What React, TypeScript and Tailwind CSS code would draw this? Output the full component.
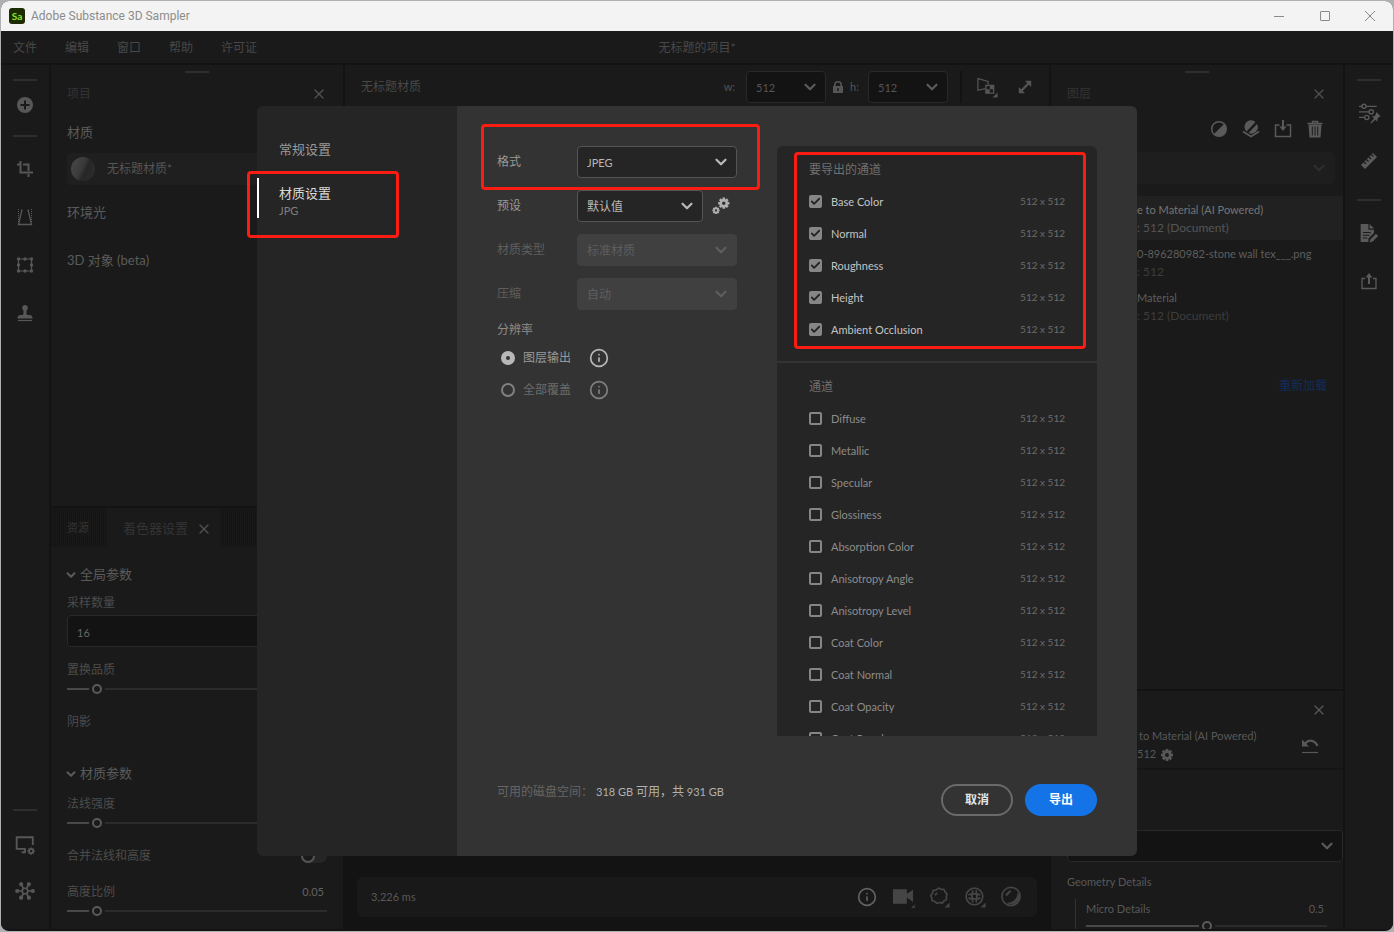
import { useState, type CSSProperties, type ReactNode } from "react";
import { Check, ChevronDown, Info, X } from "lucide-react";

const exported = ["Base Color", "Normal", "Roughness", "Height", "Ambient Occlusion"];
const available = [
  "Diffuse",
  "Metallic",
  "Specular",
  "Glossiness",
  "Absorption Color",
  "Anisotropy Angle",
  "Anisotropy Level",
  "Coat Color",
  "Coat Normal",
  "Coat Opacity",
  "Coat Roughness",
];

function Icon({ size = 18, children }: { size?: number; children: ReactNode }) {
  return (
    <svg
      width={size}
      height={size}
      viewBox="0 0 18 18"
      fill="none"
      stroke="currentColor"
      strokeWidth="1.5"
      className="shrink-0 overflow-visible"
    >
      {children}
    </svg>
  );
}

function IconButton({ label, className = "", children }: { label: string; className?: string; children: ReactNode }) {
  return (
    <button type="button" aria-label={label} className={`flex items-center justify-center ${className}`}>
      {children}
    </button>
  );
}

const gearTeeth = [0, 45, 90, 135, 180, 225, 270, 315];

function Gear({ cx, cy, r }: { cx: number; cy: number; r: number }) {
  return (
    <g strokeWidth={r * 0.5}>
      <circle cx={cx} cy={cy} r={r * 0.6} />
      {gearTeeth.map((a) => (
        <path key={a} d={`M${cx} ${cy - r * 0.7}V${cy - r * 1.1}`} transform={`rotate(${a} ${cx} ${cy})`} />
      ))}
    </g>
  );
}

function Handle() {
  return <div className="h-[2px] w-6 bg-[#2e2e2e]" />;
}

// small triangle that marks a button with a flyout
function Corner() {
  return <path d="M18.5 14v4.5H14z" fill="currentColor" stroke="none" />;
}

interface SelectProps {
  id: string;
  label: string;
  value: string;
  width: string;
  look: string;
  chevron: string;
  disabled?: boolean;
}

function Select({ id, label, value, width, look, chevron, disabled }: SelectProps) {
  return (
    <div className={`relative ${width}`}>
      <select
        id={id}
        aria-label={label}
        disabled={disabled}
        className={`h-8 w-full appearance-none rounded border pl-[9px] pt-0.5 opacity-100 outline-none ${look}`}
      >
        <option>{value}</option>
      </select>
      <ChevronDown
        size={18}
        strokeWidth={3}
        className={`pointer-events-none absolute right-[7px] top-[7px] ${chevron}`}
      />
    </div>
  );
}

function Slider({ label, initial }: { label: string; initial: number }) {
  const [value, setValue] = useState(initial);
  return (
    <input
      type="range"
      aria-label={label}
      value={value}
      onChange={(e) => setValue(Number(e.target.value))}
      style={{ "--pos": `calc(5px + (100% - 10px) * ${value / 100})` } as CSSProperties}
      className="block h-[14px] w-full appearance-none bg-transparent [&::-webkit-slider-runnable-track]:h-[2px] [&::-webkit-slider-runnable-track]:bg-[linear-gradient(90deg,#484848_var(--pos),#2b2b2b_var(--pos))] [&::-webkit-slider-thumb]:-mt-1 [&::-webkit-slider-thumb]:size-[10px] [&::-webkit-slider-thumb]:appearance-none [&::-webkit-slider-thumb]:rounded-full [&::-webkit-slider-thumb]:border-2 [&::-webkit-slider-thumb]:border-[#5a5a5a] [&::-webkit-slider-thumb]:bg-[#1a1a1a] [&::-webkit-slider-thumb]:shadow-[0_0_0_3px_#1a1a1a]"
    />
  );
}

function TitleBar() {
  return (
    <header className="flex h-[30px] shrink-0 items-center bg-[#f3f3f3] pl-2">
      <span className="flex size-4 items-center justify-center rounded-[3px] bg-[#1c2b02] text-[10px] font-bold leading-none text-[#8ce62c]">
        Sa
      </span>
      <span className="pl-1.5 font-[Roboto,sans-serif] text-xs text-[#8c8c8c]">Adobe Substance 3D Sampler</span>
      <div className="ml-auto flex text-[#8a8a8a]">
        <IconButton label="最小化" className="h-[30px] w-[46px]">
          <svg width="10" height="10" stroke="currentColor"><path d="M0 5.5h10" /></svg>
        </IconButton>
        <IconButton label="最大化" className="h-[30px] w-[45px]">
          <svg width="10" height="10" stroke="currentColor" fill="none"><rect x=".5" y=".5" width="9" height="9" rx=".5" /></svg>
        </IconButton>
        <IconButton label="关闭" className="h-[30px] w-[46px]">
          <svg width="10" height="10" stroke="currentColor"><path d="M0 0l10 10M10 0L0 10" /></svg>
        </IconButton>
      </div>
    </header>
  );
}

function MenuBar() {
  return (
    <nav className="relative flex h-[34px] shrink-0 items-center gap-7 border-b-2 border-[#131313] bg-[#1a1a1a] pl-3 pt-0.5 text-xs text-[#484848]">
      {["文件", "编辑", "窗口", "帮助", "许可证"].map((item) => (
        <button key={item} type="button">
          {item}
        </button>
      ))}
      <span className="pointer-events-none absolute inset-x-0 text-center">无标题的项目*</span>
    </nav>
  );
}

function LeftRail() {
  return (
    <aside className="flex w-[50px] shrink-0 flex-col items-center border-r-2 border-[#131313] bg-[#1a1a1a] pt-3.5 text-[#575757]">
      <Handle />
      <IconButton label="添加" className="mt-[15px] size-[18px]">
        <Icon>
          <circle cx="9" cy="9" r="8" fill="currentColor" stroke="none" />
          <path d="M9 4.5v9M4.5 9h9" stroke="#1a1a1a" strokeWidth="2" />
        </Icon>
      </IconButton>
      <div className="mt-[21px]">
        <Handle />
      </div>
      <div className="mt-[23px] flex flex-col gap-[30px]">
        <IconButton label="裁剪">
          <Icon>
            <path d="M4.5 1v11.5H17M1 4.5h3.500M7 4.500h5.500V11M12.500 14v3" strokeWidth="2" />
          </Icon>
        </IconButton>
        <IconButton label="透视">
          <Icon>
            <path d="M6 1.500L2.500 16.500h13L12 1.500" strokeWidth="1.300" />
            <path d="M2.500 1v14M15.500 1v14" strokeDasharray="1 1" strokeWidth="1" />
          </Icon>
        </IconButton>
        <IconButton label="变换">
          <Icon>
            <path d="M2.500 3h13v12h-13z" strokeWidth="1.200" />
            {[2.5, 9, 15.5].map((x) =>
              [3, 9, 15].map((y) => (x === 9 && y === 9 ? null : <circle key={`${x}-${y}`} cx={x} cy={y} r="1.700" fill="currentColor" stroke="none" />)),
            )}
          </Icon>
        </IconButton>
        <IconButton label="仿制图章">
          <Icon>
            <path d="M9 1a3 3 0 0 1 1.700 5.400c-.6.6-.2 3.400.3 4.600h2.500a3 3 0 0 1 3 3.500h-15A3 3 0 0 1 4.500 11H7c.5-1.200.9-4 .3-4.600A3 3 0 0 1 9 1z" fill="currentColor" stroke="none" />
            <path d="M2 16.500h14" strokeWidth="1.200" />
          </Icon>
        </IconButton>
      </div>
      <div className="mt-auto">
        <Handle />
      </div>
      <IconButton label="显示设置" className="mt-6">
        <Icon size={20}>
          <path d="M9 12.500H1.500V2h14.500v7M9 12v3.500H6" strokeWidth="1.700" />
          <Gear cx={14.5} cy={14.5} r={3} />
        </Icon>
      </IconButton>
      <IconButton label="社区" className="mb-7 mt-[26px]">
        <Icon size={20}>
          <circle cx="9" cy="9" r="2.500" />
          {[30, 90, 150, 210, 270, 330].map((a) => (
            <g key={a} transform={`rotate(${a} 9 9)`}>
              <path d="M9 6.500V3" />
              <circle cx="9" cy="2" r="1.900" fill="currentColor" stroke="none" />
            </g>
          ))}
        </Icon>
      </IconButton>
    </aside>
  );
}

function PanelHeader({ title }: { title: string }) {
  return (
    <>
      <div className="flex justify-center pt-1.5">
        <Handle />
      </div>
      <div className="mt-[9px] flex h-6 items-center justify-between px-4 text-xs text-[#333]">
        {title}
        <IconButton label={`关闭${title}`} className="text-[#525252]">
          <X size={16} strokeWidth={1.8} />
        </IconButton>
      </div>
    </>
  );
}

function SectionTitle({ children, className = "" }: { children: string; className?: string }) {
  return (
    <button type="button" className={`flex h-6 items-center gap-0.5 text-[13px] text-[#5a5a5a] ${className}`}>
      <ChevronDown size={14} strokeWidth={3.5} className="-ml-[3px]" />
      {children}
    </button>
  );
}

function LeftPanel() {
  return (
    <div className="flex w-[294px] shrink-0 flex-col border-r-2 border-[#131313] bg-[#1a1a1a]">
      <section className="min-h-0 flex-1 overflow-hidden">
        <PanelHeader title="项目" />
        <div className="px-4 text-[13px] text-[#5a5a5a]">
          <h2 className="mt-[15px] flex h-6 items-center">材质</h2>
          <button type="button" className="mt-2 flex h-8 w-full items-center gap-3 rounded bg-[#1f1f1f] pl-1 text-xs text-[#555]">
            <span className="size-6 rounded-full bg-[linear-gradient(115deg,#4a4a4a,#3a3a3a_45%,#262626_60%,#303030)]" />
            无标题材质*
          </button>
          <h2 className="mt-4 flex h-6 items-center">环境光</h2>
          <h2 className="mt-6 flex h-6 items-center">3D 对象 (beta)</h2>
        </div>
      </section>
      <section className="border-t-2 border-[#131313]">
        <div className="flex h-[39px] bg-[repeating-linear-gradient(90deg,#141414_0_1px,#191919_1px_2px)] text-[#343434]">
          <button type="button" className="w-14 pl-4 pt-0.5 text-left text-[11px]">
            资源
          </button>
          <div className="flex items-center gap-2 bg-[#1a1a1a] pl-4 pr-2 pt-0.5 text-[13px]">
            <button type="button">着色器设置</button>
            <IconButton label="关闭着色器设置" className="text-[#525252]">
              <X size={16} strokeWidth={1.8} />
            </IconButton>
          </div>
        </div>
        <div className="px-4 pb-[11px] pt-4 text-xs text-[#4c4c4c]">
          <SectionTitle>全局参数</SectionTitle>
          <label htmlFor="samples" className="mt-1 flex h-6 items-center">
            采样数量
          </label>
          <input
            id="samples"
            defaultValue="16"
            className="block h-8 w-full rounded border border-[#292929] bg-[#131313] px-[9px] pt-0.5 text-[11px] text-[#666]"
          />
          <div className="mt-[11px] flex h-6 items-center">置换品质</div>
          <Slider label="置换品质" initial={10} />
          <div className="mt-3.5 flex h-6 items-center">阴影</div>
          <SectionTitle className="mt-7">材质参数</SectionTitle>
          <div className="mt-1.5 flex h-6 items-center">法线强度</div>
          <Slider label="法线强度" initial={10} />
          <label className="mt-3.5 flex h-6 items-center justify-between">
            合并法线和高度
            <input
              type="checkbox"
              role="switch"
              className="h-3.5 w-[26px] appearance-none rounded-full bg-[#262626] before:block before:size-3.5 before:rounded-full before:border-2 before:border-[#555] before:bg-[#1a1a1a]"
            />
          </label>
          <div className="mt-3 flex h-6 items-center justify-between pr-[3px]">
            高度比例 <span className="text-[11px] text-[#626262]">0.05</span>
          </div>
          <Slider label="高度比例" initial={10} />
        </div>
      </section>
    </div>
  );
}

const darkSelect = "border-[#292929] bg-[#131313] text-[11px] text-[#555]";

function Viewport() {
  return (
    <main className="flex min-w-0 flex-1 flex-col bg-[#131313]">
      <div className="flex h-11 shrink-0 items-center bg-[#1a1a1a] pl-4 text-[11px] text-[#555]">
        <span className="text-xs text-[#484848]">无标题材质</span>
        <label htmlFor="w" className="ml-auto mr-[11px]">
          w:
        </label>
        <Select id="w" label="w" value="512" width="w-20" look={darkSelect} chevron="text-[#5a5a5a]" />
        <svg width="10" height="12" viewBox="0 0 10 12" className="mx-[7px] fill-current">
          <path d="M1 5V4a4 4 0 0 1 8 0v1h1v7H0V5zm1.600 0h4.800V4a2.400 2.400 0 0 0-4.800 0zM4.300 7v3h1.400V7z" />
        </svg>
        <label htmlFor="h" className="mr-[9px]">
          h:
        </label>
        <Select id="h" label="h" value="512" width="w-20" look={darkSelect} chevron="text-[#5a5a5a]" />
        <div className="ml-3 h-8 w-0.5 bg-[#131313]" />
        <IconButton label="视图" className="ml-[15px]">
          <Icon size={20}>
            <path d="M7.500 10.500L.8 12V1.500L10 4v3" strokeWidth="1.100" />
            <path d="M8 7.500h7v7H8z" strokeWidth="1.200" />
            <path d="M11.500 7.500H15V11h-3.500zM8 11h3.500v3.500H8z" fill="currentColor" stroke="none" />
            <Corner />
          </Icon>
        </IconButton>
        <IconButton label="展开" className="ml-5 mr-4">
          <Icon size={16}>
            <path d="M4 14L14 4" strokeWidth="2.600" />
            <path d="M9 2h7v7zM2 9v7h7z" fill="currentColor" stroke="none" />
          </Icon>
        </IconButton>
      </div>
      <div className="mx-3 mb-3 mt-auto flex h-10 items-center rounded-md bg-[#191919] pl-3.5 pr-4 text-[11px] text-[#585858]">
        3,226 ms
        <div className="ml-auto flex items-center gap-4 text-[#454545]">
          <IconButton label="信息" className="text-[#626262]">
            <Info size={20} />
          </IconButton>
          <IconButton label="相机">
            <Icon size={20}>
              <path d="M0 2h12.500v4L18 2.500v11L12.500 9.500V15H0z" fill="currentColor" stroke="none" />
              <path d="M20 14.500v5h-5z" fill="currentColor" stroke="#191919" strokeWidth="1" />
            </Icon>
          </IconButton>
          <IconButton label="环境">
            <Icon size={20}>
              <path d="M8.500 1l2.300 1.100 2.600-.1 1 2.400 1.800 1.800-.7 2.500.3 2.500-2.300 1.300-1.600 2-2.400-.5-2.500.7-1.900-1.700-2.500-.9-.1-2.500L1.500 7.500l1.700-1.900.5-2.500 2.500-.3z" strokeLinejoin="round" />
              <path d="M5.500 7.500a4 4 0 0 1 2-2" />
              <Corner />
            </Icon>
          </IconButton>
          <IconButton label="网格">
            <Icon size={20}>
              <circle cx="8.500" cy="8.500" r="7.500" />
              <path d="M7 3Q5.500 8.500 7 14M10 3q1.500 5.500 0 11M3 7q5.500-1.500 11 0M3 10q5.500 1.500 11 0" />
              <Corner />
            </Icon>
          </IconButton>
          <IconButton label="材质球">
            <Icon size={20}>
              <circle cx="9" cy="8.500" r="8.200" />
              <path d="M15 5.500c0 5-4 9-9 9 5 2.500 10.500-1 10.500-6z" fill="currentColor" strokeWidth=".5" />
              <path d="M5 7l3-3" strokeLinecap="round" strokeWidth="2" />
            </Icon>
          </IconButton>
        </div>
      </div>
    </main>
  );
}

function Layer({ name, info, active }: { name: string; info: string; active?: boolean }) {
  return (
    <li className={`h-11 pl-[86px] text-xs ${active ? "bg-[#212121] text-[#757575]" : "text-[#5e5e5e]"}`}>
      <div className="flex h-7 items-center text-[11px]">{name}</div>
      <div className={`flex h-2 items-center ${active ? "text-[#555]" : "text-[#3d3d3d]"}`}>{info}</div>
    </li>
  );
}

function RightPanel() {
  return (
    <div className="flex w-[296px] shrink-0 flex-col border-x-2 border-[#131313] bg-[#1a1a1a]">
      <section className="min-h-0 flex-1 overflow-hidden">
        <PanelHeader title="图层" />
        <div className="mt-3.5 flex justify-end gap-3.5 pr-[19px] text-[#5a5a5a]">
          <IconButton label="调整">
            <Icon>
              <circle cx="9" cy="9" r="7.300" />
              <path d="M14.200 3.800A7.300 7.300 0 1 1 3.800 14.200z" fill="currentColor" stroke="none" />
            </Icon>
          </IconButton>
          <IconButton label="材质图层">
            <Icon>
              <path d="M13.500 2A6.500 6.500 0 0 0 4.500 11.500zM15 4a6.500 6.500 0 0 1-8.500 9z" fill="currentColor" stroke="none" />
              <path d="M1 11.500l8 5 8-5" strokeWidth="1.800" />
            </Icon>
          </IconButton>
          <IconButton label="导入">
            <Icon>
              <path d="M5.500 5H1.500v11.500h15V5h-4" />
              <path d="M9 0v8" strokeWidth="2" />
              <path d="M5.500 6.500h7L9 11z" fill="currentColor" stroke="none" />
            </Icon>
          </IconButton>
          <IconButton label="删除">
            <Icon>
              <path d="M1.500 3.500h15M6.500 3V1.500h5V3" />
              <path d="M2.500 4.500h13l-1 13h-11z" fill="currentColor" stroke="none" />
              <path d="M6.300 6.500v9M9 6.500v9M11.700 6.500v9" stroke="#1a1a1a" strokeWidth="1" />
            </Icon>
          </IconButton>
        </div>
        <div className="ml-4 mr-2 mt-3.5">
          <Select id="filter" label="筛选" value="" width="w-full" look="border-[#1e1e1e] bg-[#1e1e1e] text-[#333]" chevron="text-[#2e2e2e]" />
        </div>
        <ul className="mt-3">
          <Layer name="e to Material (AI Powered)" info=": 512 (Document)" active />
          <Layer name="0-896280982-stone wall tex___.png" info=": 512" />
          <Layer name="Material" info=": 512 (Document)" />
        </ul>
        <div className="mt-12 flex h-5 items-center justify-end pr-4 text-xs text-[#122d5c]">
          <a href="#reload">重新加载</a>
        </div>
      </section>
      <section className="h-[240px] shrink-0 overflow-hidden border-t-2 border-[#131313] text-[11px] text-[#585858]">
        <div className="flex h-9 items-center justify-end pr-4 pt-0.5">
          <IconButton label="关闭属性">
            <X size={16} strokeWidth={1.8} />
          </IconButton>
        </div>
        <div className="flex h-[43px] items-start justify-between border-b-2 border-[#151515] pl-[88px] pr-6">
          <div>
            <div className="flex h-[18px] items-center">to Material (AI Powered)</div>
            <div className="-ml-0.5 flex h-[19px] items-center gap-1">
              512
              <IconButton label="设置">
                <Icon size={14}>
                  <Gear cx={9} cy={9} r={7} />
                </Icon>
              </IconButton>
            </div>
          </div>
          <IconButton label="重置" className="mt-2.5">
            <Icon>
              <path d="M4 6.500C8 2 14 3 16.500 9" strokeWidth="2.200" />
              <path d="M1 2.500v7h7z" fill="currentColor" stroke="none" />
              <path d="M1 15.500h16" strokeWidth="1.200" />
            </Icon>
          </IconButton>
        </div>
        <div className="ml-4 mt-[60px]">
          <Select id="mode" label="模式" value="" width="w-full" look={darkSelect} chevron="text-[#5a5a5a]" />
        </div>
        <div className="mt-2 flex h-6 items-center pl-4">Geometry Details</div>
        <div className="ml-6 mr-4 mt-[5px] border-l border-[#333] pl-[10px]">
          <div className="flex h-5 items-center justify-between pr-[3px]">
            Micro Details <span>0.5</span>
          </div>
          <Slider label="Micro Details" initial={50} />
        </div>
      </section>
    </div>
  );
}

function RightRail() {
  return (
    <aside className="flex w-12 shrink-0 flex-col items-center bg-[#1a1a1a] pt-3.5 text-[#5a5a5a]">
      <Handle />
      <IconButton label="参数" className="mt-[22px]">
        <Icon size={20}>
          <path d="M0 3h3M6 3h10M0 8h9M0 13h4.500" strokeWidth="1.200" />
          <circle cx="4.500" cy="3" r="1.900" strokeWidth="1.200" />
          <circle cx="11" cy="8" r="1.900" strokeWidth="1.200" />
          <circle cx="7" cy="13" r="1.900" strokeWidth="1.200" />
          <path d="M15.500 8l4 4-1.500.5-1.500 1.800v2.500L14.500 15 11 18.500l-.8-.8L13.500 14l-2-2h2.500l1.200-2z" fill="currentColor" stroke="none" />
        </Icon>
      </IconButton>
      <IconButton label="测量" className="mt-[29px]">
        <Icon>
          <path d="M1 13L13 1l4 4L5 17z" fill="currentColor" stroke="none" />
          <path d="M4 10l2 2M6.500 7.500l2 2M9 5l2 2M11.500 2.500l2 2" stroke="#1a1a1a" strokeWidth="1.200" />
        </Icon>
      </IconButton>
      <div className="mt-[29px]">
        <Handle />
      </div>
      <IconButton label="元数据" className="mt-[22px]">
        <Icon size={20}>
          <path d="M1.500 1h7v5h5v3l-5 5v3h-7z" fill="currentColor" stroke="none" />
          <path d="M9.500 1l4 4h-4zM9.500 17.500l.8-2.800 5-5 2 2-5 5z" fill="currentColor" stroke="none" />
          <path d="M3.500 8.500h7M3.500 11h6M3.500 13.500h4" stroke="#1a1a1a" strokeWidth="1" />
        </Icon>
      </IconButton>
      <IconButton label="分享" className="mt-[29px]">
        <Icon>
          <path d="M5 6.500H2v10h14v-10h-3" strokeWidth="1.300" />
          <path d="M9 4v8" strokeWidth="2" />
          <path d="M5.500 5.500h7L9 1z" fill="currentColor" stroke="none" />
        </Icon>
      </IconButton>
    </aside>
  );
}

function Highlight({ className }: { className: string }) {
  return <div className={`pointer-events-none absolute z-10 rounded border-3 border-[#fb1d12] ${className}`} />;
}

function Channel({ name, checked }: { name: string; checked?: boolean }) {
  return (
    <label className={`flex h-8 items-center text-[11px] ${checked ? "text-[#c4c4c4]" : "text-[#8c8c8c]"}`}>
      <span className="relative mb-0.5 mr-2 flex w-3.5">
        <input
          type="checkbox"
          defaultChecked={checked}
          className="peer size-[13px] appearance-none rounded-xs border-2 border-[#868686] checked:bg-[#868686]"
        />
        <Check size={11} strokeWidth={4} className="pointer-events-none absolute left-px top-px hidden text-[#252525] peer-checked:block" />
      </span>
      {name}
      <span className="ml-auto text-[10px] text-[#6c6c6c]">512 x 512</span>
    </label>
  );
}

const litSelect = "border-[#555] bg-[#252525] text-[#b8b8b8]";
const offSelect = "border-[#404040] bg-[#404040] text-[#5e5e5e]";

function ExportDialog() {
  return (
    <div role="dialog" aria-label="导出" className="flex h-[750px] w-[880px] text-xs">
      <aside className="relative w-[200px] shrink-0 rounded-l-md bg-[#252525] pt-8 text-[13px]">
        <button type="button" className="flex h-6 items-center pl-[22px] text-[#9a9a9a]">
          常规设置
        </button>
        <button type="button" className="mt-4 flex h-10 w-full flex-col items-start border-l-2 border-white pl-5 text-[#dadada]">
          <span className="flex h-8 items-center">材质设置</span>
          <span className="flex h-0.5 items-center text-[11px] text-[#808080]">JPG</span>
        </button>
        <Highlight className="-left-2.5 top-[65px] h-[67px] w-[152px]" />
      </aside>
      <div className="flex flex-1 flex-col rounded-r-md bg-[#333] p-10">
        <div className="flex justify-between">
          <form className="flex flex-col text-[#999]">
            <div className="relative flex h-8 items-center">
              <label htmlFor="format" className="w-20">
                格式
              </label>
              <Select id="format" label="格式" value="JPEG" width="w-40" look={`${litSelect} text-[11px]`} chevron="text-[#b8b8b8]" />
              <Highlight className="-left-4 -top-[22px] h-[66px] w-[279px]" />
            </div>
            <div className="mt-3 flex h-8 items-center">
              <label htmlFor="preset" className="w-20">
                预设
              </label>
              <Select id="preset" label="预设" value="默认值" width="w-[126px]" look={litSelect} chevron="text-[#b8b8b8]" />
              <IconButton label="预设设置" className="ml-2 text-[#b0b0b0]">
                <Icon size={20}>
                  <Gear cx={11.5} cy={6.5} r={4.600} />
                  <Gear cx={4.5} cy={13} r={3} />
                </Icon>
              </IconButton>
            </div>
            <div className="mt-3 flex h-8 items-center text-[#5e5e5e]">
              <label htmlFor="type" className="w-20">
                材质类型
              </label>
              <Select id="type" label="材质类型" value="标准材质" width="w-40" look={offSelect} chevron="text-[#5e5e5e]" disabled />
            </div>
            <div className="mt-3 flex h-8 items-center text-[#5e5e5e]">
              <label htmlFor="compression" className="w-20">
                压缩
              </label>
              <Select id="compression" label="压缩" value="自动" width="w-40" look={offSelect} chevron="text-[#5e5e5e]" disabled />
            </div>
            <div className="mt-2 flex h-6 items-center text-[#8c8c8c]">分辨率</div>
            <div className="flex h-8 items-center pb-px pl-1">
              <label className="flex w-[88px] items-center gap-2">
                <input type="radio" name="resolution" defaultChecked className="size-3.5 appearance-none rounded-full border-2 border-[#b8b8b8] checked:border-5" />
                图层输出
              </label>
              <Info size={20} className="text-[#b8b8b8]" />
            </div>
            <div className="flex h-8 items-center pb-px pl-1 text-[#6c6c6c]">
              <label className="flex w-[88px] items-center gap-2">
                <input type="radio" name="resolution" className="size-3.5 appearance-none rounded-full border-2 border-[#808080] checked:border-5" />
                全部覆盖
              </label>
              <Info size={20} className="text-[#808080]" />
            </div>
          </form>
          <div className="flex h-[590px] w-80 flex-col overflow-hidden rounded-t-md bg-[#252525]">
            <fieldset className="relative shrink-0 border-b-2 border-[#333] px-8 pb-[15px] pt-2">
              <div className="flex h-8 items-center text-[#707070]">要导出的通道</div>
              {exported.map((name) => (
                <Channel key={name} name={name} checked />
              ))}
              <Highlight className="left-[17px] top-1.5 h-[197px] w-[292px]" />
            </fieldset>
            <fieldset className="min-h-0 flex-1 overflow-hidden px-8 pt-2">
              <div className="flex h-8 items-center text-[#707070]">通道</div>
              {available.map((name) => (
                <Channel key={name} name={name} />
              ))}
            </fieldset>
          </div>
        </div>
        <footer className="mt-auto flex items-start gap-3">
          <p className="mr-auto whitespace-pre text-[#666]">
            可用的磁盘空间：{" "}
            <span className="text-[#b0b0b0]">
              <span className="text-[11px]">318 GB </span>可用，共<span className="text-[11px]"> 931 GB</span>
            </span>
          </p>
          <button type="button" className="h-8 w-[72px] rounded-full border-2 border-[#6a6a6a] font-bold text-[#e4e4e4]">
            取消
          </button>
          <button type="button" className="h-8 w-[72px] rounded-full bg-[#1473e6] font-bold text-white">
            导出
          </button>
        </footer>
      </div>
    </div>
  );
}

export default function App() {
  return (
    <div className="h-screen bg-[#aeb0b4] p-px [font-family:Lato,'Noto_Sans_CJK_SC',sans-serif]">
      <div className="relative flex h-full flex-col overflow-hidden rounded-lg bg-[#131313]">
        <TitleBar />
        <MenuBar />
        <div className="flex min-h-0 flex-1 pb-0.5">
          <LeftRail />
          <LeftPanel />
          <Viewport />
          <RightPanel />
          <RightRail />
        </div>
        <div className="absolute inset-x-0 bottom-0 top-[30px] flex items-center justify-center">
          <ExportDialog />
        </div>
      </div>
    </div>
  );
}
